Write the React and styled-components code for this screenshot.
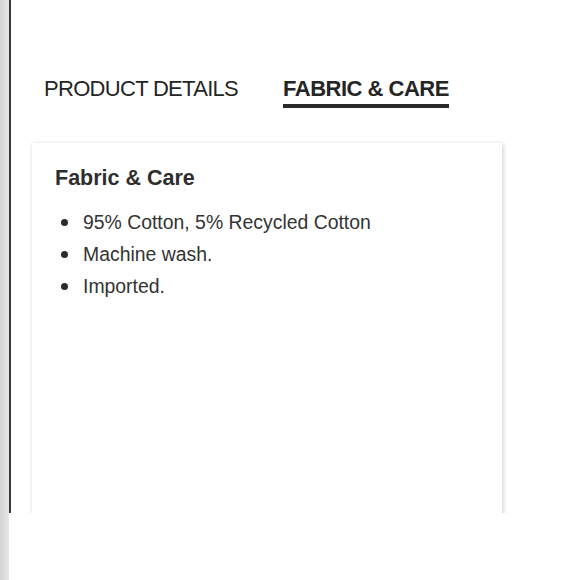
import React from "react";
import styled, { createGlobalStyle } from "styled-components";

const GlobalStyle = createGlobalStyle`
  html, body { margin: 0; padding: 0; background: #ffffff; }
  body { font-family: "Liberation Sans", Arial, Helvetica, sans-serif; color: #333; }
`;

const Page = styled.div`
  display: flex;
  width: 580px;
  height: 580px;
  overflow: hidden;
  background: #fff;
`;

const SideStrip = styled.div`
  width: 9px;
  flex: none;
  background: linear-gradient(to right, #d2d2d2, #e8e8e8);
`;

const Main = styled.div`
  flex: 1;
  display: flex;
  flex-direction: column;
`;

const Frame = styled.div`
  height: 513px;
  border-left: 2px solid #3a3a3a;
  overflow: hidden;
  padding-top: 78px;
  box-sizing: border-box;
`;

const Tabs = styled.div`
  display: flex;
  gap: 45px;
  padding-left: 33px;
`;

const Tab = styled.div`
  font-size: 22px;
  line-height: 22px;
  color: #252525;
  font-weight: ${(p) => (p.$active ? 700 : 400)};
  letter-spacing: ${(p) => (p.$active ? "-0.5px" : "-0.7px")};
  padding-bottom: 4px;
  border-bottom: 4px solid ${(p) => (p.$active ? "#2a2a2a" : "transparent")};
  white-space: nowrap;
`;

const Card = styled.section`
  margin: 35px 0 0 21px;
  width: 470px;
  height: 420px;
  box-sizing: border-box;
  padding: 23px 23px;
  background: #fff;
  box-shadow: 1px 1px 5px rgba(0, 0, 0, 0.2);
`;

const Title = styled.h2`
  margin: 0;
  font-size: 21.5px;
  line-height: 24px;
  font-weight: 700;
  color: #2e2e2e;
`;

const List = styled.ul`
  list-style: none;
  margin: 16px 0 0;
  padding: 0;
`;

const Item = styled.li`
  display: flex;
  align-items: center;
  gap: 15px;
  margin-left: 6px;
  font-size: 19.4px;
  line-height: 32px;
  color: #333;

  &::before {
    content: "";
    width: 7px;
    height: 7px;
    border-radius: 50%;
    background: #2b2b2b;
    flex: none;
  }
`;

const items = ["95% Cotton, 5% Recycled Cotton", "Machine wash.", "Imported."];

export default function App() {
  return (
    <>
      <GlobalStyle />
      <Page>
        <SideStrip />
        <Main>
          <Frame>
            <Tabs>
              <Tab>PRODUCT DETAILS</Tab>
              <Tab $active>FABRIC &amp; CARE</Tab>
            </Tabs>
            <Card>
              <Title>Fabric &amp; Care</Title>
              <List>
                {items.map((t) => (
                  <Item key={t}>{t}</Item>
                ))}
              </List>
            </Card>
          </Frame>
        </Main>
      </Page>
    </>
  );
}
